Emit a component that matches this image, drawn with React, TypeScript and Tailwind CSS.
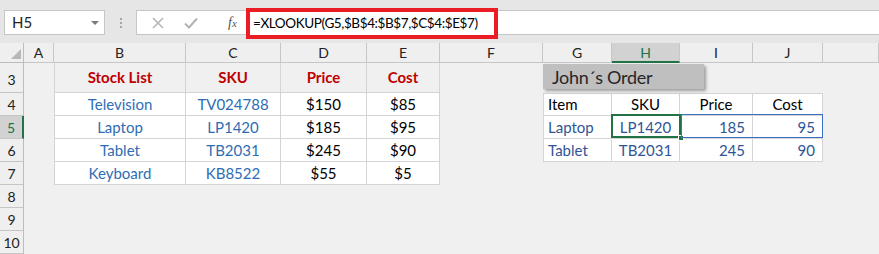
import React from "react";

const cols = ["A", "B", "C", "D", "E", "F", "G", "H", "I", "J", ""];

const stock = [
  ["Television", "TV024788", "$150", "$85"],
  ["Laptop", "LP1420", "$185", "$95"],
  ["Tablet", "TB2031", "$245", "$90"],
  ["Keyboard", "KB8522", "$55", "$5"],
];

const order = [
  ["Item", "SKU", "Price", "Cost"],
  ["Laptop", "LP1420", "185", "95"],
  ["Tablet", "TB2031", "245", "90"],
];

function FormulaBar() {
  return (
    <div className="h-[43px] bg-[#e6e6e6] flex items-start pt-[10px] pl-[4px]">
      <div className="w-[101px] h-[25px] bg-white border border-[#c6c6c6] flex items-center justify-between pl-[7px] pr-[5px] text-[15px] text-[#222]">
        <span>H5</span>
        <span className="w-0 h-0 border-l-[4px] border-r-[4px] border-t-[4px] border-l-transparent border-r-transparent border-t-[#7a7a7a]" />
      </div>
      <div className="w-[31px] h-[25px] flex flex-col items-center justify-center gap-[2px]">
        <span className="w-[2px] h-[2px] bg-[#a6a6a6]" />
        <span className="w-[2px] h-[2px] bg-[#a6a6a6]" />
        <span className="w-[2px] h-[2px] bg-[#a6a6a6]" />
      </div>
      <div className="flex-1 h-[25px] bg-white border border-r-0 border-[#c6c6c6] flex items-center relative">
        <div className="w-[109px] flex items-center pl-[15px] gap-[20px]">
          <svg width="12" height="12" viewBox="0 0 12 12">
            <path d="M1 1L11 11M11 1L1 11" stroke="#b3b3b3" strokeWidth="1.5" fill="none" />
          </svg>
          <svg width="14" height="12" viewBox="0 0 14 12">
            <path d="M1 6.5L5 10.5L13 1.5" stroke="#b3b3b3" strokeWidth="2" fill="none" />
          </svg>
          <span className="ml-[10px] text-[14px] italic text-[#555] font-['Liberation_Serif',serif]">
            f<span className="text-[11px]">x</span>
          </span>
        </div>
        <div className="absolute left-[109px] top-[-3px] w-[252px] h-[31px] border-[4px] border-[#ea1c24] bg-white flex items-center pl-[3px] text-[13.5px] tracking-[-0.4px] text-black whitespace-nowrap">
          =XLOOKUP(G5,$B$4:$B$7,$C$4:$E$7)
        </div>
      </div>
    </div>
  );
}

export default function App() {
  const rowNums = [3, 4, 5, 6, 7, 8, 9, 10];
  const rowH = ["h-[30px]", "h-[23px]", "h-[23px]", "h-[23px]", "h-[23px]", "h-[23px]", "h-[23px]", "h-[23px]"];

  const cellFor = (r: number, c: number) => {
    // c: 1..10 = A..J, 11 = rest of the sheet
    if (r === 3 && c >= 2 && c <= 5) {
      const t = ["Stock List", "SKU", "Price", "Cost"][c - 2];
      return (
        <div className={`border-r border-[#d4d4d4] ${c === 2 ? "border-l" : ""} border-b flex items-end justify-center pb-[4px] font-bold text-[15px] text-[#c00000]`}>
          {t}
        </div>
      );
    }
    if (r >= 4 && r <= 7 && c >= 2 && c <= 5) {
      const v = stock[r - 4][c - 2];
      const color = c <= 3 ? "text-[#2e6db4]" : "text-black";
      return (
        <div className={`bg-white border-r border-b border-[#d4d4d4] ${c === 2 ? "border-l" : ""} flex items-center justify-center text-[15px] ${color}`}>
          {v}
        </div>
      );
    }
    if (r >= 4 && r <= 6 && c >= 7 && c <= 10) {
      const v = order[r - 4][c - 7];
      const head = r === 4;
      let align = "justify-center";
      if (c === 7) align = "justify-start pl-[4px]";
      else if (!head && c >= 9) align = "justify-end pr-[7px]";
      const color = head ? "text-black" : "text-[#2f5597]";
      return (
        <div className={`bg-white border-r border-b border-[#d4d4d4] ${c === 7 ? "border-l" : ""} ${r === 4 ? "border-t" : ""} flex items-center ${align} text-[15px] ${color}`}>
          {v}
        </div>
      );
    }
    return <div />;
  };

  return (
    <div className="w-[879px] h-[254px] overflow-hidden bg-[#f0f0f0] font-['Lato','Noto_Sans',sans-serif]">
      <FormulaBar />
      <div className="relative grid grid-cols-[24px_30px_132px_95px_86px_73px_103px_69px_68px_73px_70px_1fr] grid-rows-[20px_30px_23px_23px_23px_23px_23px_23px_23px]">
        {/* corner */}
        <div className="border-r border-b border-[#bdbdbd] bg-[#efefef] flex items-end justify-end pr-[2px] pb-[3px]">
          <svg width="10" height="10" viewBox="0 0 10 10">
            <path d="M10 0L10 10L0 10Z" fill="#b7b7b7" />
          </svg>
        </div>
        {cols.map((c, i) => (
          <div
            key={i}
            className={`flex items-center justify-center text-[14px] ${
              c === "H"
                ? "bg-[#d2d2d2] text-[#217346] border-r border-[#c6c6c6] border-b-2 border-b-[#217346]"
                : "bg-[#efefef] text-[#222] border-r border-b border-[#c6c6c6]"
            }`}
          >
            {c}
          </div>
        ))}
        {rowNums.map((r, ri) => (
          <React.Fragment key={r}>
            <div
              className={`${rowH[ri]} flex ${r === 3 ? "items-end pb-[2px]" : "items-center"} justify-center text-[14px] border-b ${
                r === 5
                  ? "bg-[#d2d2d2] text-[#217346] border-r-2 border-r-[#217346] border-b-[#c6c6c6]"
                  : "bg-[#efefef] text-[#222] border-r border-[#bdbdbd] border-b-[#c6c6c6]"
              }`}
            >
              {r}
            </div>
            {Array.from({ length: 11 }, (_, k) => (
              <React.Fragment key={k}>{cellFor(r, k + 1)}</React.Fragment>
            ))}
          </React.Fragment>
        ))}

        {/* shape: John's Order */}
        <div className="absolute left-[543px] top-[21px] w-[161px] h-[25px] bg-[#bfbfbf] shadow-[2px_2px_3px_rgba(0,0,0,0.35)] flex items-center pl-[9px] text-[18px] tracking-[-0.3px] leading-none text-[#262626]">
          John´s Order
        </div>

        {/* selection: H5 */}
        <div className="absolute left-[611px] top-[71px] w-[70px] h-[24px] border-2 border-[#217346]" />
        <div className="absolute left-[678px] top-[92px] w-[6px] h-[6px] bg-[#217346] border border-white" />
        {/* highlighted range I5:J5 */}
        <div className="absolute left-[681px] top-[71px] w-[142px] h-[24px] border border-[#3c6fc6]" />
      </div>
    </div>
  );
}
